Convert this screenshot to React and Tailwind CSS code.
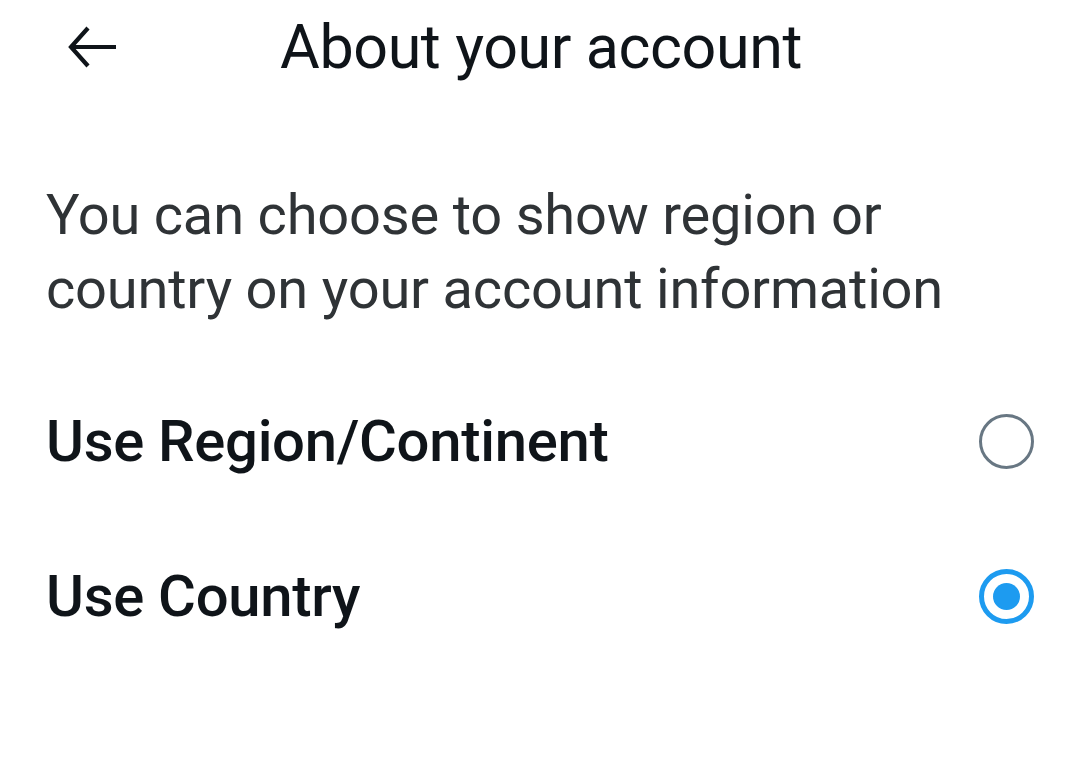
import React from "react";

export default function App() {
  return (
    <div className="w-[1080px] h-[767px] bg-white overflow-hidden" style={{ fontFamily: "Roboto, 'Noto Sans', sans-serif" }}>
      <div className="flex items-center h-[94px]">
        <div className="w-[280px] pl-[66px] flex items-center">
          <svg width="52" height="44" viewBox="0 0 52 44" fill="none" stroke="#0f1419" strokeWidth="4.2" strokeLinecap="butt" strokeLinejoin="miter">
            <path d="M50 22H6" />
            <path d="M22 3L5 22L22 41" />
          </svg>
        </div>
        <div className="text-[61px] leading-none text-[#0f1419] tracking-[-0.4px]">About your account</div>
      </div>
      <div className="pl-[46px] pt-[84px] pr-[20px] text-[56px] leading-[74px] text-[#2f3336] tracking-[-0.2px] whitespace-nowrap">
        You can choose to show region or
        <br />
        country on your account information
      </div>
      <div className="pl-[46px] pr-[46px] mt-[38px]">
        <div className="flex items-center justify-between h-[155px]">
          <div className="text-[58px] font-medium text-[#0f1419] tracking-[-0.3px]">Use Region/Continent</div>
          <div className="w-[55px] h-[55px] rounded-full border-[3px] border-[#687783]" />
        </div>
        <div className="flex items-center justify-between h-[155px]">
          <div className="text-[58px] font-medium text-[#0f1419] tracking-[-0.3px]">Use Country</div>
          <div className="w-[55px] h-[55px] rounded-full border-[5px] border-[#1d9bf0] flex items-center justify-center">
            <div className="w-[27px] h-[27px] rounded-full bg-[#1d9bf0]" />
          </div>
        </div>
      </div>
    </div>
  );
}
